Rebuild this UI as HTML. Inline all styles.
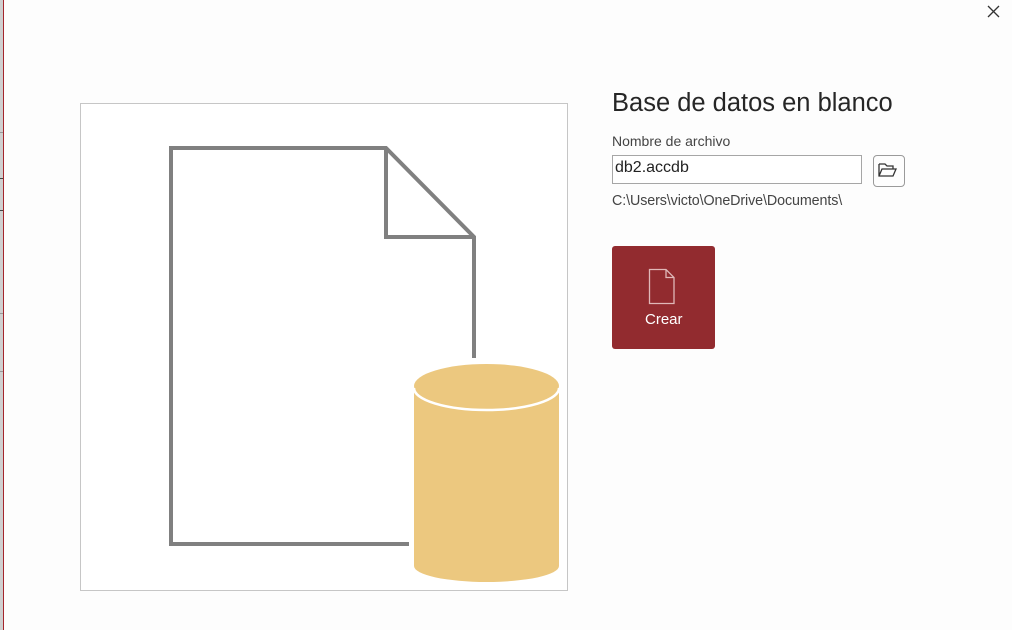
<!DOCTYPE html>
<html><head><meta charset="utf-8"><style>
body{margin:0;width:1012px;height:630px;background:#fdfdfd;position:relative;overflow:hidden;font-family:"Segoe UI","Liberation Sans",sans-serif}
.strip{position:absolute;left:0;top:0;width:3px;height:630px;background:#d0d0d0}
.red{position:absolute;left:3px;top:0;width:1px;height:630px;background:#a4262c}
.t{position:absolute;white-space:nowrap}
</style></head><body>
<div class="strip"></div><div class="red"></div>
<div style="position:absolute;left:0;top:132px;width:3px;height:1px;background:#999"></div>
<div style="position:absolute;left:0;top:178px;width:3px;height:1px;background:#444"></div>
<div style="position:absolute;left:0;top:210px;width:3px;height:1px;background:#444"></div>
<div style="position:absolute;left:0;top:313px;width:3px;height:1px;background:#999"></div>
<div style="position:absolute;left:0;top:371px;width:3px;height:1px;background:#999"></div>
<svg style="position:absolute;left:985px;top:3px" width="16" height="16"><path d="M3 3L14 14M14 3L3 14" stroke="#333" stroke-width="1.3"/></svg>
<div style="position:absolute;left:80px;top:103px;width:486px;height:486px;border:1px solid #c6c6c6;background:#fff"></div>
<svg style="position:absolute;left:0;top:0" width="1012" height="630">
<path d="M409 544H171V148H386L474 237V358M386 148V237H474" fill="none" stroke="#808080" stroke-width="4"/>
<path d="M414 388V566A72.5 16 0 0 0 559 566V388Z" fill="#ecc87f"/>
<ellipse cx="486.5" cy="386" rx="72.5" ry="22" fill="#ecc87f"/>
<path d="M414 388A72.5 22 0 0 0 559 388" fill="none" stroke="#fff" stroke-width="2.5"/>
</svg>
<div class="t" style="left:612px;top:89px;font-size:25.5px;color:#262626;font-weight:300">Base de datos en blanco</div>
<div class="t" style="left:612px;top:133px;font-size:14px;color:#444">Nombre de archivo</div>
<div style="position:absolute;left:612px;top:155px;width:248px;height:27px;border:1px solid #a6a6a6;background:#fff"></div>
<div class="t" style="left:615px;top:159px;font-size:16px;color:#222">db2.accdb</div>
<div style="position:absolute;left:873px;top:155px;width:30px;height:30px;border:1px solid #9a9a9a;border-radius:4px;background:#fdfdfd"></div>
<svg style="position:absolute;left:877px;top:161px" width="22" height="18"><path d="M2 3H8L10 5H16V8M2 3V15H16L19 8H5L2 15" fill="none" stroke="#333" stroke-width="1.3"/></svg>
<div class="t" style="left:612px;top:193px;font-size:14.3px;color:#444;letter-spacing:-0.1px">C:\Users\victo\OneDrive\Documents\</div>
<div style="position:absolute;left:612px;top:246px;width:103px;height:103px;background:#922b2f;border-radius:3px"></div>
<svg style="position:absolute;left:647px;top:268px" width="30" height="38"><path d="M2.5 1.5H19L27 9.5V35.5H2.5ZM19 1.5V9.5H27" fill="none" stroke="#e0b8b8" stroke-width="1.3"/></svg>
<div class="t" style="left:645px;top:311px;font-size:15px;color:#fff">Crear</div>
</body></html>
